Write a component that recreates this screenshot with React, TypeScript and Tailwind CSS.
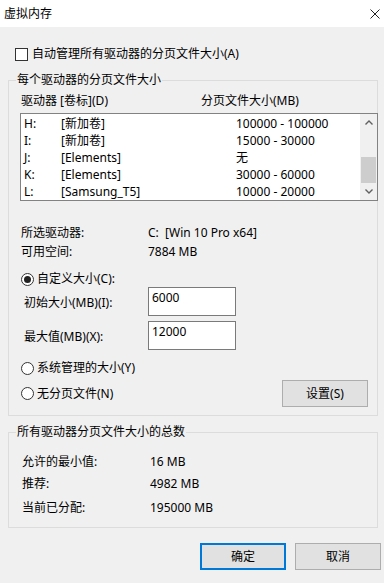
import React from 'react';

const drives = [
  { letter: 'H:', label: '[新加卷]', size: '100000 - 100000' },
  { letter: 'I:', label: '[新加卷]', size: '15000 - 30000' },
  { letter: 'J:', label: '[Elements]', size: '无' },
  { letter: 'K:', label: '[Elements]', size: '30000 - 60000' },
  { letter: 'L:', label: '[Samsung_T5]', size: '10000 - 20000' },
];

const totals = [
  { label: '允许的最小值:', value: '16 MB', mt: 'mt-[21px]' },
  { label: '推荐:', value: '4982 MB', mt: 'mt-[6px]' },
  { label: '当前已分配:', value: '195000 MB', mt: 'mt-[8px]' },
];

const Radio = ({ checked }: { checked?: boolean }) => (
  <span className="w-[13px] h-[13px] rounded-full border border-[#333] bg-white flex items-center justify-center shrink-0">
    {checked && <span className="w-[7px] h-[7px] rounded-full bg-[#222]" />}
  </span>
);

const GroupBox = ({
  title,
  className,
  children,
}: {
  title: string;
  className: string;
  children: React.ReactNode;
}) => (
  <div className={`relative ml-[8px] w-[370px] border border-[#dcdcdc] ${className}`}>
    <span className="absolute left-[7px] top-[-9px] px-[1px] bg-[#f0f0f0] leading-[16px]">{title}</span>
    {children}
  </div>
);

const App = () => {
  return (
    <div className="w-[384px] h-[583px] overflow-hidden bg-[#f0f0f0] text-black text-[12px] leading-[16px] font-['Noto_Sans','Noto_Sans_CJK_SC',sans-serif]">
      {/* title bar */}
      <div className="h-[27px] bg-white flex items-center justify-between pl-[4px] pr-[4px]">
        <span>虚拟内存</span>
        <svg width="10" height="10" viewBox="0 0 10 10" className="mr-[0px]">
          <path d="M0.5 0.5 L9.5 9.5 M9.5 0.5 L0.5 9.5" stroke="#222" strokeWidth="1" />
        </svg>
      </div>

      {/* auto manage */}
      <div className="mt-[19px] h-[16px] flex items-center pl-[15px] gap-[4px]">
        <span className="w-[13px] h-[13px] border border-[#333] bg-white shrink-0" />
        <span>自动管理所有驱动器的分页文件大小(A)</span>
      </div>

      {/* per drive */}
      <GroupBox title="每个驱动器的分页文件大小" className="mt-[18px] h-[336px]">
        <div className="mt-[12px] pl-[12px] flex">
          <span className="w-[180px]">驱动器 [卷标](D)</span>
          <span>分页文件大小(MB)</span>
        </div>

        <div className="mt-[4px] ml-[11px] w-[358px] h-[88px] border border-[#828282] bg-white flex">
          <div className="flex-1 pt-[1px] pl-[3px]">
            {drives.map((d) => (
              <div key={d.letter} className="h-[17px] flex items-center">
                <span className="w-[37px]">{d.letter}</span>
                <span className="w-[175px]">{d.label}</span>
                <span>{d.size}</span>
              </div>
            ))}
          </div>
          <div className="w-[17px] bg-[#f0f0f0] flex flex-col">
            <div className="h-[17px] flex items-center justify-center">
              <svg width="8" height="5" viewBox="0 0 8 5">
                <path d="M0.5 4.5 L4 1 L7.5 4.5" fill="none" stroke="#606060" strokeWidth="1.4" />
              </svg>
            </div>
            <div className="flex-1">
              <div className="mt-[26px] h-[26px] mx-[1px] bg-[#cdcdcd]" />
            </div>
            <div className="h-[17px] flex items-center justify-center">
              <svg width="8" height="5" viewBox="0 0 8 5">
                <path d="M0.5 0.5 L4 4 L7.5 0.5" fill="none" stroke="#606060" strokeWidth="1.4" />
              </svg>
            </div>
          </div>
        </div>

        <div className="mt-[24px] pl-[12px] flex flex-col gap-[3px]">
          <div className="h-[16px] flex">
            <span className="w-[127px]">所选驱动器:</span>
            <span>C:&nbsp;&nbsp;[Win 10 Pro x64]</span>
          </div>
          <div className="h-[16px] flex">
            <span className="w-[127px]">可用空间:</span>
            <span>7884 MB</span>
          </div>
        </div>

        <div className="mt-[11px] h-[16px] pl-[12px] flex items-center gap-[3px]">
          <Radio checked />
          <span>自定义大小(C):</span>
        </div>

        <div className="h-[29px] pl-[15px] flex items-center">
          <span className="w-[124px] pt-[3px]">初始大小(MB)(I):</span>
          <div className="w-[88px] h-[29px] border border-[#7a7a7a] bg-white pl-[3px] pt-[2px]">6000</div>
        </div>
        <div className="mt-[5px] h-[29px] pl-[15px] flex items-center">
          <span className="w-[124px] pt-[3px]">最大值(MB)(X):</span>
          <div className="w-[88px] h-[29px] border border-[#7a7a7a] bg-white pl-[3px] pt-[2px]">12000</div>
        </div>

        <div className="mt-[10px] h-[16px] pl-[12px] flex items-center gap-[3px]">
          <Radio />
          <span>系统管理的大小(Y)</span>
        </div>

        <div className="mt-[4px] h-[27px] pl-[12px] pr-[9px] flex items-center justify-between">
          <div className="flex items-center gap-[3px]">
            <Radio />
            <span>无分页文件(N)</span>
          </div>
          <div className="w-[86px] h-[27px] border border-[#adadad] bg-[#e1e1e1] flex items-center justify-center">
            设置(S)
          </div>
        </div>
      </GroupBox>

      {/* totals */}
      <GroupBox title="所有驱动器分页文件大小的总数" className="mt-[16px] h-[96px]">
        {totals.map((t) => (
          <div key={t.label} className={`${t.mt} h-[16px] pl-[13px] flex`}>
            <span className="w-[128px]">{t.label}</span>
            <span>{t.value}</span>
          </div>
        ))}
      </GroupBox>

      {/* buttons */}
      <div className="mt-[15px] pr-[3px] flex justify-end gap-[9px]">
        <div className="w-[86px] h-[27px] border-2 border-[#0078d7] bg-[#e1e1e1] flex items-center justify-center">
          确定
        </div>
        <div className="w-[86px] h-[27px] border border-[#adadad] bg-[#e1e1e1] flex items-center justify-center">
          取消
        </div>
      </div>
    </div>
  );
};

export default App;
